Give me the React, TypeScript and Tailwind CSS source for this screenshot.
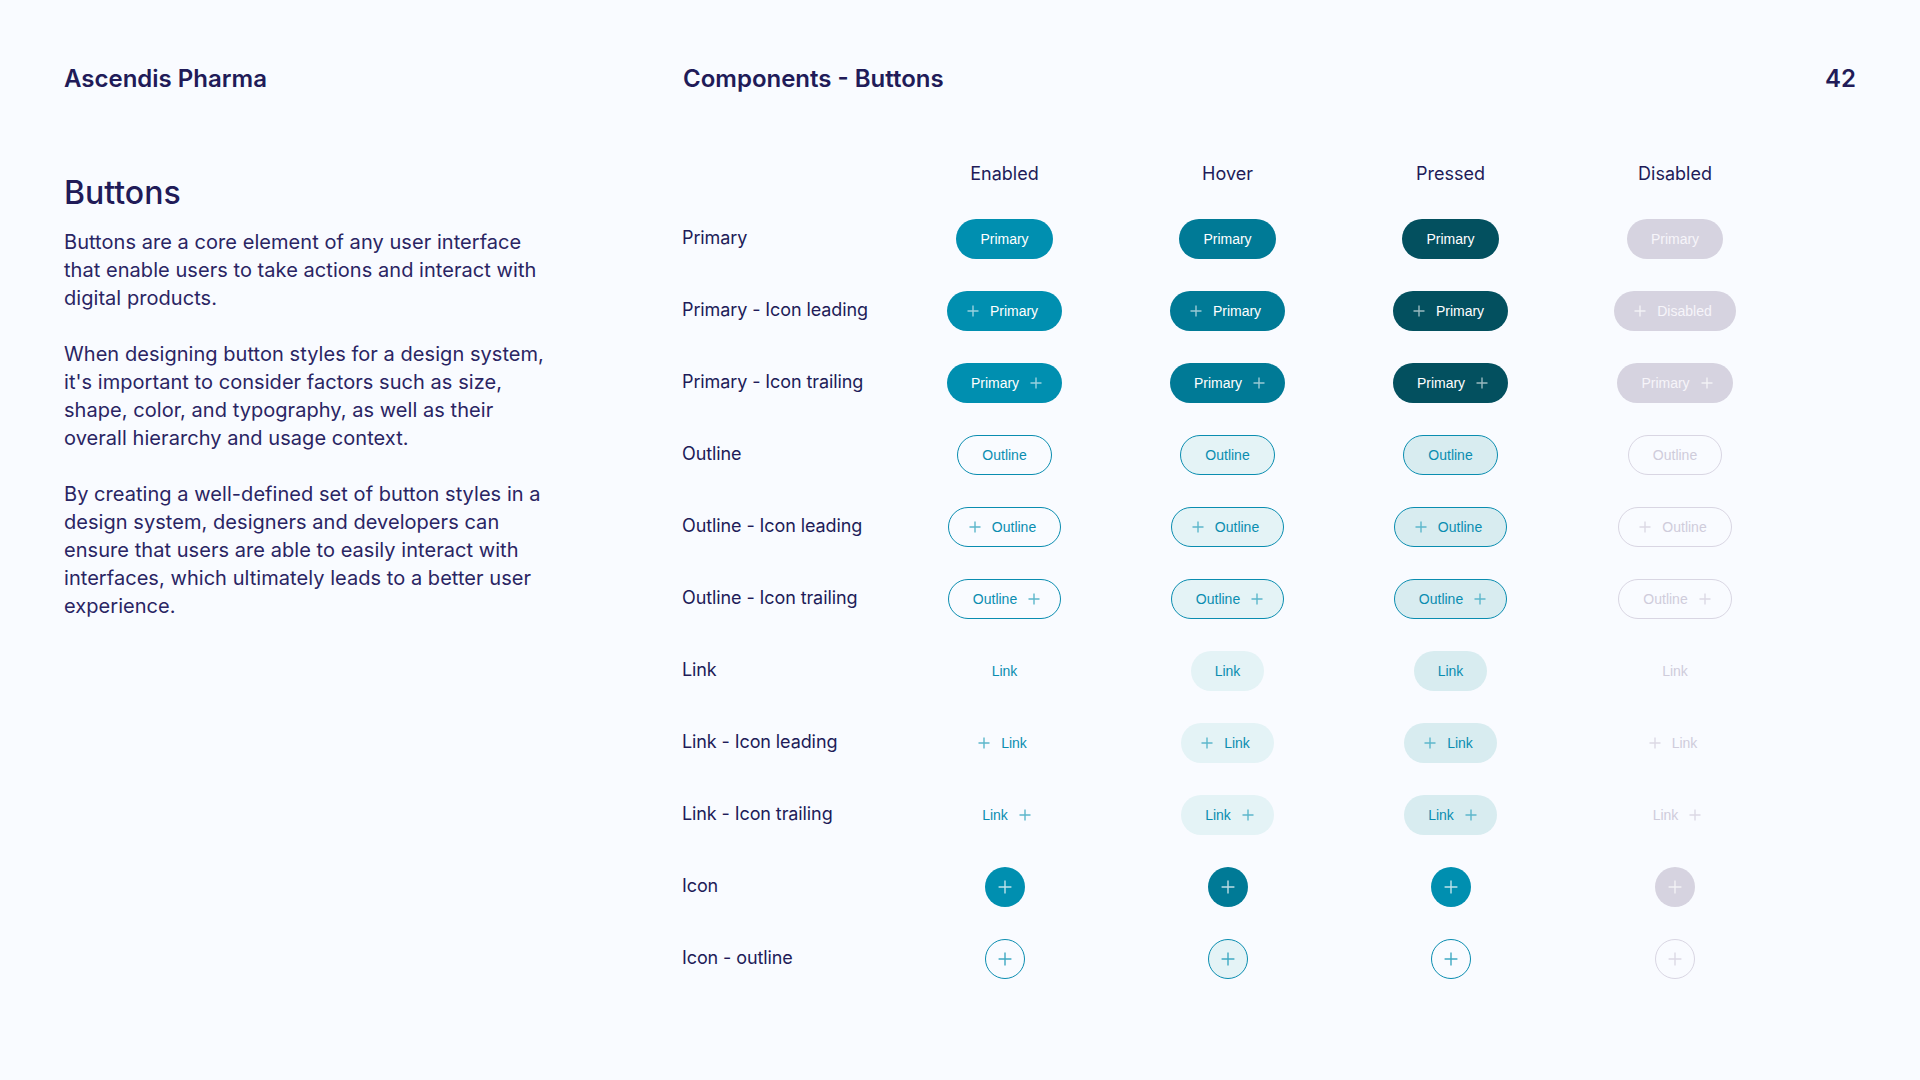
import React from 'react';

type Kind = 'primary' | 'outline' | 'link' | 'icon' | 'iconOutline';
type IconPos = 'none' | 'leading' | 'trailing';
type State = 'enabled' | 'hover' | 'pressed' | 'disabled';

interface Row {
  label: string;
  kind: Kind;
  icon: IconPos;
  text: string;
}

const ROWS: Row[] = [
  { label: 'Primary', kind: 'primary', icon: 'none', text: 'Primary' },
  { label: 'Primary - Icon leading', kind: 'primary', icon: 'leading', text: 'Primary' },
  { label: 'Primary - Icon trailing', kind: 'primary', icon: 'trailing', text: 'Primary' },
  { label: 'Outline', kind: 'outline', icon: 'none', text: 'Outline' },
  { label: 'Outline - Icon leading', kind: 'outline', icon: 'leading', text: 'Outline' },
  { label: 'Outline - Icon trailing', kind: 'outline', icon: 'trailing', text: 'Outline' },
  { label: 'Link', kind: 'link', icon: 'none', text: 'Link' },
  { label: 'Link - Icon leading', kind: 'link', icon: 'leading', text: 'Link' },
  { label: 'Link - Icon trailing', kind: 'link', icon: 'trailing', text: 'Link' },
  { label: 'Icon', kind: 'icon', icon: 'none', text: '' },
  { label: 'Icon - outline', kind: 'iconOutline', icon: 'none', text: '' },
];

const STATES: { key: State; title: string }[] = [
  { key: 'enabled', title: 'Enabled' },
  { key: 'hover', title: 'Hover' },
  { key: 'pressed', title: 'Pressed' },
  { key: 'disabled', title: 'Disabled' },
];

// surface + text colour per kind and state
const SURFACE: Record<Kind, Record<State, string>> = {
  primary: {
    enabled: 'bg-[#008fb0] text-white',
    hover: 'bg-[#007a96] text-white',
    pressed: 'bg-[#03505f] text-white',
    disabled: 'bg-[#d6d3e0] text-[#f6f5fa]',
  },
  outline: {
    enabled: 'border border-[#0a8db0] text-[#0a8db0]',
    hover: 'border border-[#0a8db0] bg-[#e4f3f6] text-[#0a8db0]',
    pressed: 'border border-[#0a8db0] bg-[#d8ecf0] text-[#0a8db0]',
    disabled: 'border border-[#d9d6e3] text-[#cfccdb]',
  },
  link: {
    enabled: 'text-[#0a8db0]',
    hover: 'bg-[#e4f3f6] text-[#0a8db0]',
    pressed: 'bg-[#d8ecf0] text-[#0a8db0]',
    disabled: 'text-[#cfccdb]',
  },
  icon: {
    enabled: 'bg-[#008fb0]',
    hover: 'bg-[#007a96]',
    pressed: 'bg-[#008fb0]',
    disabled: 'bg-[#d6d3e0]',
  },
  iconOutline: {
    enabled: 'border border-[#0a8db0]',
    hover: 'border border-[#0a8db0] bg-[#e4f3f6]',
    pressed: 'border border-[#0a8db0]',
    disabled: 'border border-[#d9d6e3]',
  },
};

const PLUS: Record<Kind, Record<State, string>> = {
  primary: {
    enabled: 'text-white/60',
    hover: 'text-white/60',
    pressed: 'text-white/60',
    disabled: 'text-white/70',
  },
  outline: {
    enabled: 'text-[#5cb7cb]',
    hover: 'text-[#5cb7cb]',
    pressed: 'text-[#5cb7cb]',
    disabled: 'text-[#dcd9e5]',
  },
  link: {
    enabled: 'text-[#5cb7cb]',
    hover: 'text-[#5cb7cb]',
    pressed: 'text-[#5cb7cb]',
    disabled: 'text-[#dcd9e5]',
  },
  icon: {
    enabled: 'text-white/75',
    hover: 'text-white/75',
    pressed: 'text-white/75',
    disabled: 'text-white/70',
  },
  iconOutline: {
    enabled: 'text-[#3fa9c2]',
    hover: 'text-[#3fa9c2]',
    pressed: 'text-[#3fa9c2]',
    disabled: 'text-[#dcd9e5]',
  },
};

function PlusIcon({ size, className }: { size: number; className?: string }) {
  return (
    <svg width={size} height={size} viewBox="0 0 12 12" fill="none" className={className}>
      <path d="M6 0.5V11.5M0.5 6H11.5" stroke="currentColor" strokeWidth={12 / size * 1.4} />
    </svg>
  );
}

function DemoButton({ row, state }: { row: Row; state: State }) {
  const surface = SURFACE[row.kind][state];
  const plus = PLUS[row.kind][state];

  if (row.kind === 'icon' || row.kind === 'iconOutline') {
    return (
      <div className={`flex w-10 h-10 items-center justify-center rounded-full ${surface}`}>
        <PlusIcon size={14} className={plus} />
      </div>
    );
  }

  // the disabled leading primary reads "Disabled" in the spec sheet
  const text = row.kind === 'primary' && row.icon === 'leading' && state === 'disabled' ? 'Disabled' : row.text;

  const pad =
    row.icon === 'leading' ? 'pl-5 pr-6 gap-[11px]' : row.icon === 'trailing' ? 'pl-6 pr-5 gap-[11px]' : 'px-6';

  return (
    <div
      className={`flex h-10 items-center rounded-full font-['Liberation_Sans',Arial,sans-serif] text-[14px] ${pad} ${surface}`}
    >
      {row.icon === 'leading' && <PlusIcon size={12} className={plus} />}
      <span>{text}</span>
      {row.icon === 'trailing' && <PlusIcon size={12} className={plus} />}
    </div>
  );
}

export default function App() {
  return (
    <div className="w-[1920px] h-[1080px] bg-[#f9fbff] px-16 pt-[63px] font-['Inter','Noto_Sans',sans-serif] text-[#211b58]">
      {/* Header */}
      <div className="grid grid-cols-[619px_1fr_auto] text-2xl font-semibold">
        <div>Ascendis Pharma</div>
        <div>Components - Buttons</div>
        <div>42</div>
      </div>

      <div className="grid grid-cols-[618px_1fr]">
        {/* Intro */}
        <div className="pt-[78px] w-[488px]">
          <h1 className="text-[32px] leading-10 font-medium">Buttons</h1>
          <div className="mt-[15px] flex flex-col gap-7 text-[20px] leading-7 tracking-[0.05px] text-[#2a2563]">
            <p>
              Buttons are a core element of any user interface that enable users to take actions and interact with
              digital products.
            </p>
            <p>
              When designing button styles for a design system, it's important to consider factors such as size,
              shape, color, and typography, as well as their overall hierarchy and usage context.
            </p>
            <p>
              By creating a well-defined set of button styles in a design system, designers and developers can ensure
              that users are able to easily interact with interfaces, which ultimately leads to a better user
              experience.
            </p>
          </div>
        </div>

        {/* Matrix */}
        <div className="pt-[48px]">
          <div className="grid grid-cols-[211px_223px_223px_223px_226px] text-[18px]">
            <div className="h-[60px]" />
            {STATES.map((s) => (
              <div key={s.key} className="h-[60px] flex items-center justify-center">
                {s.title}
              </div>
            ))}
            {ROWS.map((row) => (
              <React.Fragment key={row.label}>
                <div className="h-[72px] flex items-center pb-[3px] tracking-[-0.1px]">{row.label}</div>
                {STATES.map((s) => (
                  <div key={s.key} className="h-[72px] flex items-center justify-center">
                    <DemoButton row={row} state={s.key} />
                  </div>
                ))}
              </React.Fragment>
            ))}
          </div>
        </div>
      </div>
    </div>
  );
}
